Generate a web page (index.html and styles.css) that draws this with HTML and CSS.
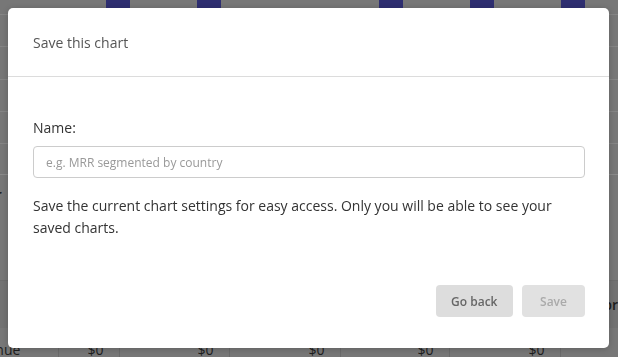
FILE: index.html
```html
<!DOCTYPE html>
<html lang="en">
<head>
    <title>Save this chart</title>
    <link rel="stylesheet" href="styles.css">
</head>
<body>
    <div class="page">
        <div class="chart">
            <div class="col"><div class="bar" style="height: 30px"></div></div>
            <div class="col"><div class="bar" style="height: 24px"></div></div>
            <div class="col"></div>
            <div class="col"><div class="bar" style="height: 40px"></div></div>
            <div class="col"><div class="bar" style="height: 20px"></div></div>
            <div class="col"><div class="bar" style="height: 36px"></div></div>
        </div>
        <div class="legend">
            <span class="legend-label">Subscriber</span>
        </div>
        <div class="row row-dark">
            <span class="row-label"></span>
            <span class="row-end">pr</span>
        </div>
        <table class="values">
            <colgroup>
                <col style="width: 58px">
                <col style="width: 61px">
                <col style="width: 110px">
                <col style="width: 111px">
                <col style="width: 109px">
                <col style="width: 111px">
                <col>
            </colgroup>
            <tr>
                <td class="first">Revenue</td>
                <td>$0</td>
                <td>$0</td>
                <td>$0</td>
                <td>$0</td>
                <td>$0</td>
                <td></td>
            </tr>
        </table>
    </div>

    <div class="overlay">
        <div class="modal">
            <div class="modal-header">Save this chart</div>
            <div class="modal-body">
                <label for="chartName">Name:</label>
                <input type="text" id="chartName" placeholder="e.g. MRR segmented by country">
                <p>Save the current chart settings for easy access. Only you will be able to see your saved charts.</p>
            </div>
            <div class="modal-footer">
                <button class="btn">Go back</button>
                <button class="btn" disabled>Save</button>
            </div>
        </div>
    </div>
</body>
</html>
```

FILE: styles.css
```css
body{
    margin: 0;
    width: 618px;
    height: 357px;
    overflow: hidden;
    background-color: #777;
    font-family: "Open Sans", "Liberation Sans", sans-serif;
}
.page{
    color: #1d1d1d;
}
.chart{
    height: 175px;
    box-sizing: border-box;
    padding-left: 72px;
    display: flex;
    border-bottom: 1px solid #8a8a8a;
    background-image: repeating-linear-gradient(to bottom, transparent 0, transparent 14px, rgba(255,255,255,0.1) 14px, rgba(255,255,255,0.1) 15px, transparent 15px, transparent 32.3px);
}
.col{
    width: 92.5px;
    display: flex;
    justify-content: center;
    align-items: flex-start;
}
.bar{
    width: 24px;
    background-color: #2e2e70;
}
.legend{
    height: 105px;
    font-size: 14px;
    font-weight: 600;
    padding-top: 10px;
    box-sizing: border-box;
}
.legend-label{
    margin-left: -70px;
}
.row{
    height: 48px;
    display: flex;
    justify-content: space-between;
    align-items: center;
    font-size: 14px;
    font-weight: 600;
    border-top: 1px solid #6c6c6c;
    box-sizing: border-box;
}
.row-dark{
    background-color: #727272;
}
.values{
    border-collapse: collapse;
    table-layout: fixed;
    font-size: 14px;
    width: 618px;
}
.values td{
    border-left: 1px solid #6a6a6a;
    padding: 12px 15px 4px 0;
    text-align: right;
    white-space: nowrap;
    overflow: hidden;
}
.values td.first{
    border-left: none;
    text-align: left;
    padding-left: 0;
    text-indent: -36px;
    overflow: visible;
}

.overlay{
    position: fixed;
    top: 0;
    left: 0;
    right: 0;
    bottom: 0;
    padding: 8px 9px 0 8px;
}
.modal{
    width: 601px;
    height: 340px;
    background-color: #fff;
    border-radius: 5px;
    box-shadow: 0 1px 6px rgba(0, 0, 0, 0.2);
    display: flex;
    flex-direction: column;
}
.modal-header{
    height: 69px;
    box-sizing: border-box;
    padding: 0 25px;
    display: flex;
    align-items: center;
    font-size: 14px;
    color: #555;
    border-bottom: 1px solid #dcdcdc;
}
.modal-body{
    padding: 41px 24px 0 25px;
    color: #333;
    font-size: 14px;
}
label{
    display: block;
    line-height: 20px;
    margin-bottom: 8px;
}
input{
    display: block;
    width: 552px;
    height: 32px;
    box-sizing: border-box;
    border: 1px solid #ccc;
    border-radius: 4px;
    padding: 0 12px;
    font-family: inherit;
    font-size: 12px;
    color: #333;
}
input::placeholder{
    color: #999;
}
p{
    margin: 17px 0 0;
    line-height: 22px;
}
.modal-footer{
    margin-top: auto;
    padding: 0 24px 31px;
    display: flex;
    justify-content: flex-end;
    gap: 9px;
}
.btn{
    height: 32px;
    min-width: 63px;
    padding: 0 15.5px;
    border: none;
    border-radius: 4px;
    background-color: #ddd;
    color: #666;
    font-family: inherit;
    font-size: 12px;
    font-weight: 600;
}
.btn:disabled{
    background-color: #e1e1e1;
    color: #aaa;
}
```
